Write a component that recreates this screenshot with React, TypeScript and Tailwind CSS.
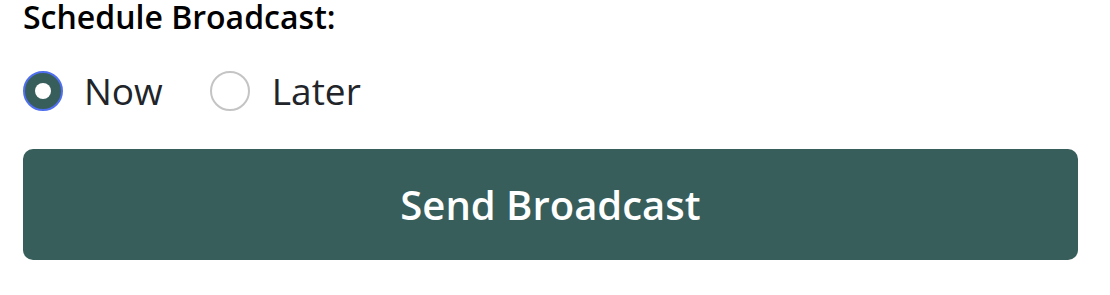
export default function App() {
  return (
    <div className="w-[1110px] h-[295px] bg-white px-[23px] font-['Open_Sans',sans-serif]">
      {/* Heading */}
      <label className="block text-[32px] font-semibold leading-[34px] text-black">Schedule Broadcast:</label>

      {/* Radio options */}
      <div className="mt-[36px] flex h-[42px] items-center">
        <label className="flex items-center">
          <span className="flex h-[40px] w-[40px] items-center justify-center rounded-full border-2 border-[#4f6ff0] bg-[#375e5b]">
            <span className="h-[16px] w-[16px] rounded-full bg-white" />
          </span>
          <span className="ml-[21px] text-[37px] leading-[42px] text-[#212529]">Now</span>
        </label>
        <label className="ml-[47px] flex items-center">
          <span className="h-[40px] w-[40px] rounded-full border-2 border-[#c4c4c4] bg-white" />
          <span className="ml-[22px] text-[37px] leading-[42px] text-[#212529]">Later</span>
        </label>
      </div>

      {/* Submit */}
      <button className="mt-[37px] flex h-[111px] w-[1055px] items-center justify-center rounded-[10px] bg-[#375e5b] text-[40px] font-semibold text-white">
        Send Broadcast
      </button>
    </div>
  );
}
